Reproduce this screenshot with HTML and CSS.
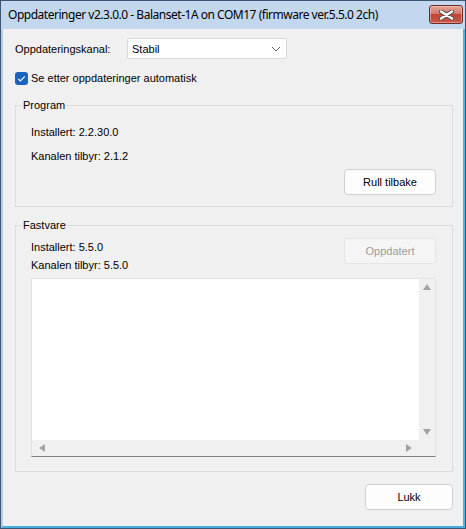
FILE: index.html
```html
<!DOCTYPE html>
<html lang="no">
<head>
<meta charset="utf-8">
<title>Oppdateringer</title>
<link rel="stylesheet" href="styles.css">
</head>
<body>
<div class="window">
  <div class="titlebar">
    <span class="title">Oppdateringer v2.3.0.0 - Balanset-1A on COM17 (firmware ver.5.5.0 2ch)</span>
    <button class="close" type="button" aria-label="Lukk">
      <svg width="15" height="10" viewBox="0 0 15 10">
        <path d="M2 1.5 L13 8.5 M13 1.5 L2 8.5" stroke="#4a4a4a" stroke-width="4.2" stroke-linecap="round" fill="none"/>
        <path d="M2 1.5 L13 8.5 M13 1.5 L2 8.5" stroke="#ffffff" stroke-width="2.4" stroke-linecap="round" fill="none"/>
      </svg>
    </button>
  </div>
  <div class="client">
    <div class="row-channel">
      <span class="label-channel">Oppdateringskanal:</span>
      <div class="select">
        <span>Stabil</span>
        <svg class="chev" width="10" height="6" viewBox="0 0 10 6"><path d="M1 1 L5 5 L9 1" stroke="#606060" stroke-width="1" fill="none"/></svg>
      </div>
    </div>
    <div class="row-check">
      <span class="checkbox"><svg width="13" height="13" viewBox="0 0 13 13"><path d="M3.3 6.8 L5.4 8.9 L9.8 4.4" stroke="#ffffff" stroke-width="1.1" fill="none"/></svg></span>
      <span>Se etter oppdateringer automatisk</span>
    </div>
    <fieldset class="group group-program">
      <legend>Program</legend>
      <div class="line">Installert: 2.2.30.0</div>
      <div class="line line-second">Kanalen tilbyr: 2.1.2</div>
      <div class="btn-row"><button class="btn" type="button">Rull tilbake</button></div>
    </fieldset>
    <fieldset class="group group-firmware">
      <legend>Fastvare</legend>
      <div class="fw-row">
        <div class="fw-lines">
          <div class="line">Installert: 5.5.0</div>
          <div class="line">Kanalen tilbyr: 5.5.0</div>
        </div>
        <button class="btn btn-disabled" type="button">Oppdatert</button>
      </div>
      <div class="textbox">
        <div class="text-area"></div>
        <div class="vscroll">
          <svg width="8" height="6" viewBox="0 0 8 6"><polygon points="4,0 8,6 0,6" fill="#a3a3a3"/></svg>
          <svg width="8" height="6" viewBox="0 0 8 6"><polygon points="0,0 8,0 4,6" fill="#a3a3a3"/></svg>
        </div>
        <div class="hscroll">
          <svg width="6" height="8" viewBox="0 0 6 8"><polygon points="0,4 6,0 6,8" fill="#a3a3a3"/></svg>
          <svg width="6" height="8" viewBox="0 0 6 8"><polygon points="0,0 6,4 0,8" fill="#a3a3a3"/></svg>
        </div>
        <div class="corner"></div>
      </div>
    </fieldset>
    <div class="footer">
      <button class="btn btn-close" type="button">Lukk</button>
    </div>
  </div>
</div>
</body>
</html>
```

FILE: styles.css
```css
* { box-sizing: border-box; }
html, body {
  margin: 0;
  padding: 0;
  background: #f0f0f0;
}
body {
  font-family: "Liberation Sans", Arial, sans-serif;
  font-size: 11px;
  color: #000;
}
.window {
  width: 466px;
  height: 529px;
  border: 1px solid #3d5673;
  background: linear-gradient(#c3d8ee, #b3cce7);
  display: flex;
  flex-direction: column;
}
.titlebar {
  height: 28px;
  flex: none;
  display: flex;
  align-items: center;
  padding-left: 7px;
  position: relative;
}
.title {
  font-family: "Noto Sans", "Open Sans", sans-serif;
  font-size: 12px;
  letter-spacing: -0.48px;
  color: #000;
  white-space: nowrap;
  line-height: 28px;
}
.close {
  position: absolute;
  right: 2px;
  top: 4px;
  width: 34px;
  height: 19px;
  padding: 0;
  margin: 0;
  border: 1px solid #6b2b25;
  border-radius: 3px;
  background: linear-gradient(#e6a596 0%, #d27a6a 45%, #c04434 50%, #c9584a 100%);
  box-shadow: inset 0 0 0 1px rgba(255, 220, 210, 0.45);
  display: flex;
  align-items: center;
  justify-content: center;
}
.client {
  flex: 1;
  background: #f0f0f0;
  border-left: 2px solid #b4cde8;
  border-right: 2px solid #56b1e3;
  border-bottom: 2px solid #4aaee3;
  padding: 9px 10px 0 12px;
  display: flex;
  flex-direction: column;
}
.row-channel {
  display: flex;
  align-items: center;
  height: 21px;
}
.label-channel {
  width: 112px;
  flex: none;
}
.select {
  width: 160px;
  height: 21px;
  background: #fff;
  border: 1px solid #d9d9d9;
  border-radius: 2px;
  display: flex;
  align-items: center;
  justify-content: space-between;
  padding: 0 4px 0 4px;
}
.chev { margin-right: 1px; }
.row-check {
  margin-top: 12px;
  height: 14px;
  display: flex;
  align-items: center;
  gap: 3px;
}
.checkbox {
  width: 13px;
  height: 13px;
  border-radius: 3px;
  background: #1a63bf;
  display: flex;
}
.group {
  margin: 0;
  border: 1px solid #dcdcdc;
  padding: 0 16px 0 15px;
  min-width: 0;
}
.group legend {
  padding: 0 1px;
  margin-left: -9px;
  line-height: 13px;
}
.line {
  line-height: 13px;
  height: 13px;
}
.group-program {
  margin-top: 14px;
  padding-top: 14px;
  padding-bottom: 11px;
}
.line-second { margin-top: 11px; }
.btn-row {
  display: flex;
  justify-content: flex-end;
  margin-top: 6px;
}
.btn {
  font-family: "Liberation Sans", Arial, sans-serif;
  font-size: 11px;
  color: #000;
  width: 92px;
  height: 26px;
  background: #fdfdfd;
  border: 1px solid #d0d0d0;
  border-radius: 4px;
  padding: 0;
  margin: 0;
}
.btn-disabled {
  color: #9d9d9d;
  background: #f5f5f5;
  border-color: #e5e5e5;
}
.group-firmware {
  margin-top: 12px;
  padding-top: 6px;
  padding-bottom: 14px;
}
.fw-row {
  display: flex;
  justify-content: space-between;
  align-items: flex-start;
}
.fw-lines {
  padding-top: 3px;
  display: flex;
  flex-direction: column;
  gap: 5px;
}
.textbox {
  margin-top: 6px;
  height: 179px;
  background: #fff;
  border: 1px solid #e3e3e3;
  border-bottom: 1px solid #7f7f7f;
  display: grid;
  grid-template-columns: 1fr 16px;
  grid-template-rows: 1fr 16px;
}
.text-area { background: #fff; }
.vscroll {
  background: #f0f0f0;
  display: flex;
  flex-direction: column;
  align-items: center;
  justify-content: space-between;
  padding: 5px 0 5px 0;
}
.hscroll {
  background: #f0f0f0;
  display: flex;
  align-items: center;
  justify-content: space-between;
  padding: 0 7px 0 7px;
}
.corner { background: #f0f0f0; }
.footer {
  margin-top: 12px;
  display: flex;
  justify-content: flex-end;
}
.btn-close { width: 88px; }
```
